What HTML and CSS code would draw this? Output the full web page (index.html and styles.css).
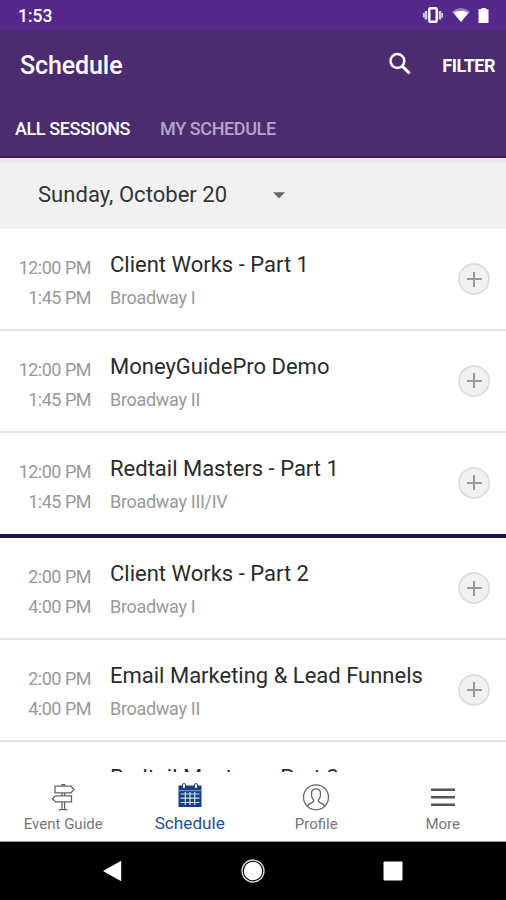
FILE: index.html
```html
<!DOCTYPE html>
<html lang="en">
<head>
<meta charset="utf-8">
<title>Schedule</title>
<link rel="stylesheet" href="styles.css">
</head>
<body>
<div class="screen">
  <div class="status">
    <span class="clock">1:53</span>
    <svg class="status-icons" width="70" height="20" viewBox="0 0 70 20">
      <g fill="none" stroke="#fff"><rect x="8.300" y="2.300" width="7.400" height="13.400" rx="1" stroke-width="2.400"/><path d="M5 5v8.500M19 5v8.500" stroke-width="2.600" opacity=".75"/><path d="M2.800 7v4.500M21.200 7v4.500" stroke-width="1.800" opacity=".75"/></g>
      <path d="M31 5.500Q40 -1.500 49 5.500L40 16Z" fill="#fff" opacity=".4"/>
      <path d="M32.400 6.800Q40 2.800 47.600 6.800L40 16Z" fill="#fff"/>
      <path d="M60.500 3.200V2h4.500v1.200h2.500V17h-10V3.200Z" fill="#fff"/>
    </svg>
  </div>
  <header class="appbar">
    <div class="toolbar">
      <h1>Schedule</h1>
      <svg class="search" width="24" height="24" viewBox="0 0 24 24" fill="none" stroke="#fff"><circle cx="9.400" cy="9" r="6.900" stroke-width="2.500"/><path d="M14.200 14l7.300 7.300" stroke-width="3.100"/></svg>
      <span class="filter">FILTER</span>
    </div>
    <nav class="tabs"><span class="tab on">ALL SESSIONS</span><span class="tab">MY SCHEDULE</span></nav>
  </header>
  <div class="datebar"><span class="date">Sunday, October 20</span><svg width="12" height="7" viewBox="0 0 12 7"><path d="M0 .3h12L6 6.600Z" fill="#666"/></svg></div>
  <main class="list">
    <article class="row"><div class="times"><span>12:00 PM</span><span>1:45 PM</span></div><div class="info"><h2>Client Works - Part 1</h2><p>Broadway I</p></div><span class="add"></span></article>
    <article class="row"><div class="times"><span>12:00 PM</span><span>1:45 PM</span></div><div class="info"><h2>MoneyGuidePro Demo</h2><p>Broadway II</p></div><span class="add"></span></article>
    <article class="row last"><div class="times"><span>12:00 PM</span><span>1:45 PM</span></div><div class="info"><h2>Redtail Masters - Part 1</h2><p>Broadway III/IV</p></div><span class="add"></span></article>
    <article class="row"><div class="times"><span>2:00 PM</span><span>4:00 PM</span></div><div class="info"><h2>Client Works - Part 2</h2><p>Broadway I</p></div><span class="add"></span></article>
    <article class="row"><div class="times"><span>2:00 PM</span><span>4:00 PM</span></div><div class="info"><h2>Email Marketing &amp; Lead Funnels</h2><p>Broadway II</p></div><span class="add"></span></article>
    <article class="row"><div class="times"></div><div class="info"><h2>Redtail Masters - Part 2</h2></div></article>
  </main>
  <nav class="bottom">
    <div class="item">
      <svg width="28" height="28" viewBox="0 0 28 28" fill="none" stroke="#666" stroke-width="1.300"><path d="M6 3.200H22L25 6.500 22 9.800H6ZM22.500 12.800H6.500L3.500 15.800 6.500 18.800H22.500ZM13 3.200V1.600h2.600v1.600M13 9.800v3M15.600 9.800v3M13 18.800v7.500M15.600 18.800v7.500M10 26.700h8.500"/></svg>
      <span>Event Guide</span>
    </div>
    <div class="item on">
      <svg width="28" height="28" viewBox="0 0 28 28"><path d="M2.500 3.500h23v21.500h-23Z" fill="#173d82"/><path d="M4.500 12h19M4.500 16.200h19M4.500 20.500h19M9.300 10v13M14 10v13M18.700 10v13" stroke="#d5ddec" stroke-width="1.200"/><path d="M2.500 8.700h23" stroke="#a9b9d5" stroke-width=".8"/><g fill="#fff" stroke="#173d82"><rect x="6.500" y="1.500" width="3" height="5" rx="1.500"/><rect x="18.500" y="1.500" width="3" height="5" rx="1.500"/></g></svg>
      <span>Schedule</span>
    </div>
    <div class="item">
      <svg width="28" height="28" viewBox="0 0 28 28" fill="none" stroke="#666" stroke-width="1.300"><circle cx="14" cy="14.300" r="12.500"/><path d="M5.500 23.300c.5-2.300 2.500-3 4.500-3.700 1.500-.6 2-1 1.700-2.600C9.800 15.500 9.500 13 9.500 10.500 9.500 7.500 11.200 5.800 14 5.800s4.500 1.700 4.500 4.700c0 2.500-.3 5-2.200 6.500-.3 1.600.2 2 1.700 2.600 2 .7 4 1.400 4.500 3.700"/></svg>
      <span>Profile</span>
    </div>
    <div class="item">
      <svg width="28" height="28" viewBox="0 0 28 28" stroke="#555" stroke-width="2.500"><path d="M2 6.700h24M2 14.200h24M2 21.700h24"/></svg>
      <span>More</span>
    </div>
  </nav>
  <div class="sysnav">
    <svg width="20" height="22" viewBox="0 0 20 22"><path d="M1 11 19.200 .8V21.200Z" fill="#fff"/></svg>
    <svg width="24" height="24" viewBox="0 0 24 24"><circle cx="12" cy="12" r="11" fill="none" stroke="#ddd" stroke-width="1.300"/><circle cx="12" cy="12" r="9.200" fill="#fff"/></svg>
    <svg width="20" height="20" viewBox="0 0 20 20"><rect x=".5" y=".5" width="19" height="19" rx="1" fill="#fff"/></svg>
  </div>
</div>
</body>
</html>
```
FILE: styles.css
```css
* { box-sizing: border-box; margin: 0; padding: 0; }
body { font-family: Roboto, "Liberation Sans", sans-serif; background: #fff; overflow: hidden; }
svg { display: block; flex: none; }
.screen { width: 506px; height: 900px; display: flex; flex-direction: column; overflow: hidden; }
.status { height: 30px; flex: none; background: #55298a; color: #fff; display: flex; justify-content: space-between; padding: 6px 15px 0 18px; }
.clock { font-size: 17.500px; line-height: 20px; font-weight: 500; }
.appbar { height: 128px; flex: none; background: #4a2c6f; border-bottom: 2px solid #3d1764; color: #fff; }
.toolbar { height: 70px; display: flex; align-items: center; padding: 0 11px 0 20px; }
h1 { font-size: 25px; font-weight: 500; letter-spacing: -.1px; flex: 1; }
.search { margin: -2px 30px 0 0; }
.filter { font-size: 18px; font-weight: 700; letter-spacing: -.5px; }
.tabs { display: flex; gap: 30px; padding: 18px 0 0 15px; font-size: 18px; line-height: 22px; font-weight: 500; letter-spacing: -.4px; }
.tab { color: #b6a5c9; white-space: nowrap; }
.tab.on { color: #fff; }
.datebar { height: 71px; flex: none; background: #f1f1f1; border-top: 5px solid #ececec; display: flex; align-items: center; gap: 46px; padding: 0 0 2px 38px; color: #333; }
.date { font-size: 22px; line-height: 28px; letter-spacing: .04px; white-space: nowrap; }
.list { flex: 1; min-height: 0; overflow: hidden; }
.row { height: 101.800px; display: flex; border-bottom: 2px solid #e4e4e4; padding-right: 16px; }
.row.last { height: 105.600px; border-bottom: 4px solid #1d1450; }
.times { width: 91px; padding-top: 24px; text-align: right; font-size: 18px; letter-spacing: -.5px; line-height: 30px; color: #999; }
.times span { display: block; }
.info { flex: 1; padding: 20px 0 0 19px; white-space: nowrap; }
h2 { font-size: 22px; line-height: 32px; font-weight: 400; color: #2b2b2b; }
p { font-size: 18px; letter-spacing: -.3px; line-height: 30px; color: #999; margin-top: 2px; }
.add { width: 32px; height: 32px; margin-top: 34px; border-radius: 50%; border: 2px solid #dedede; background: linear-gradient(#999, #999) center/15px 2px no-repeat, linear-gradient(#999, #999) center/2px 15px no-repeat, #f1f1f1; }
.bottom { height: 70px; flex: none; border-bottom: 1px solid #999; display: grid; grid-template-columns: repeat(4, 1fr); background: #fff; }
.item { display: flex; flex-direction: column; align-items: center; padding-top: 11px; font-size: 15px; line-height: 20px; color: #777; }
.item span { margin-top: 3px; }
.item.on { color: #24518f; font-size: 17.200px; padding-top: 10px; }
.sysnav { height: 58px; flex: none; background: #000; display: flex; align-items: center; justify-content: space-between; padding: 0 103px 0 102px; }
```
